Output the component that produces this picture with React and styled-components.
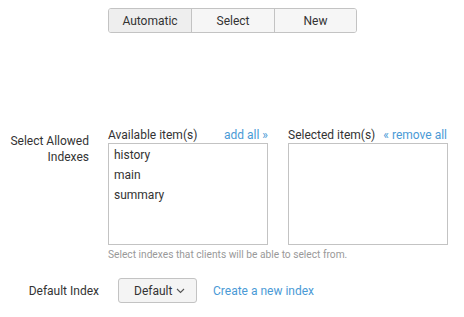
import React from "react";
import styled, { createGlobalStyle } from "styled-components";

const GlobalStyle = createGlobalStyle`
    body {
        margin: 0;
        background: #fff;
        font-family: Roboto, "Liberation Sans", sans-serif;
        font-size: 12px;
        color: #333;
    }
`;

const colors = {
    text: "#333",
    muted: "#999",
    link: "#4a9ad6",
    border: "#c3c3c3"
};

const Page = styled.div`
    width: 464px;
    height: 317px;
    position: relative;
    overflow: hidden;
`;

const ButtonGroup = styled.div`
    display: flex;
    margin: 8px 0 0 108px;
    width: 249px;
    height: 25px;
    border: 1px solid ${colors.border};
    border-radius: 3px;
    box-sizing: border-box;
    overflow: hidden;
`;

const GroupButton = styled.button`
    flex: ${(p) => p.grow};
    border: none;
    border-left: ${(p) => (p.first ? "none" : `1px solid ${colors.border}`)};
    background: ${(p) => (p.active ? "#eeeeee" : "#f6f6f6")};
    font-family: inherit;
    font-size: 12px;
    color: ${colors.text};
    padding: 0;
`;

const FieldRow = styled.div`
    display: flex;
    align-items: flex-start;
    margin-top: ${(p) => p.top}px;
`;

const Label = styled.div`
    width: ${(p) => p.width}px;
    padding-right: ${(p) => p.gap}px;
    text-align: right;
    line-height: 16px;
    padding-top: ${(p) => p.offset}px;
    flex-shrink: 0;
`;

const Lists = styled.div`
    display: flex;
    flex-direction: column;
`;

const ListPair = styled.div`
    display: flex;
    gap: 20px;
`;

const ListColumn = styled.div`
    width: 160px;
`;

const ListHeader = styled.div`
    display: flex;
    justify-content: space-between;
    line-height: 15px;
`;

const Link = styled.a`
    color: ${colors.link};
    text-decoration: none;
    cursor: pointer;
    margin-right: ${(p) => p.right || 0}px;
`;

const ListBox = styled.div`
    height: 102px;
    border: 1px solid ${colors.border};
    box-sizing: border-box;
    padding: 1px 0 0 5px;
`;

const ListItem = styled.div`
    line-height: 20px;
`;

const Help = styled.div`
    font-size: 10.2px;
    color: ${colors.muted};
    margin-top: 4px;
`;

const Dropdown = styled.button`
    display: flex;
    align-items: center;
    gap: 4px;
    width: 79px;
    height: 25px;
    padding: 0 0 0 15px;
    border: 1px solid ${colors.border};
    border-radius: 3px;
    background: #f4f4f4;
    font-family: inherit;
    font-size: 12px;
    color: ${colors.text};
    box-sizing: border-box;
`;

const DefaultRow = styled.div`
    display: flex;
    align-items: center;
    gap: 16px;
`;

const Chevron = () => (
    <svg width="9" height="6" viewBox="0 0 9 6">
        <path d="M1 1 L4.5 4.5 L8 1" fill="none" stroke="#555" strokeWidth="1.1" />
    </svg>
);

const App = () => {
    const available = ["history", "main", "summary"];
    return (
        <Page>
            <GlobalStyle />
            <ButtonGroup>
                <GroupButton first active grow={83}>
                    Automatic
                </GroupButton>
                <GroupButton grow={83}>Select</GroupButton>
                <GroupButton grow={82}>New</GroupButton>
            </ButtonGroup>
            <FieldRow top={95}>
                <Label width={89} gap={19} offset={5}>
                    Select Allowed Indexes
                </Label>
                <Lists>
                    <ListPair>
                        <ListColumn>
                            <ListHeader>
                                <span>Available item(s)</span>
                                <Link>add all »</Link>
                            </ListHeader>
                            <ListBox>
                                {available.map((item) => (
                                    <ListItem key={item}>{item}</ListItem>
                                ))}
                            </ListBox>
                        </ListColumn>
                        <ListColumn>
                            <ListHeader>
                                <span>Selected item(s)</span>
                                <Link right={1}>« remove all</Link>
                            </ListHeader>
                            <ListBox />
                        </ListColumn>
                    </ListPair>
                    <Help>Select indexes that clients will be able to select from.</Help>
                </Lists>
            </FieldRow>
            <FieldRow top={18}>
                <Label width={99} gap={19} offset={5}>
                    Default Index
                </Label>
                <DefaultRow>
                    <Dropdown>
                        Default <Chevron />
                    </Dropdown>
                    <Link>Create a new index</Link>
                </DefaultRow>
            </FieldRow>
        </Page>
    );
};

export default App;
